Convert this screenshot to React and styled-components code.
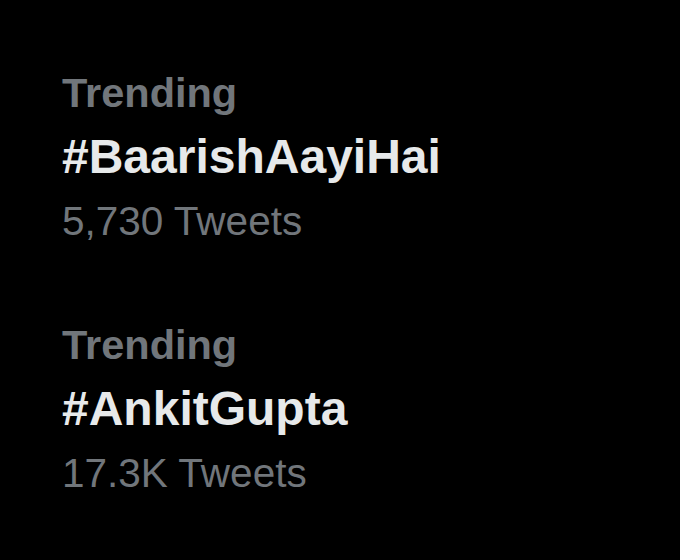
import React from 'react'
import styled, { createGlobalStyle } from 'styled-components'

const GlobalStyle = createGlobalStyle`
  html, body {
    margin: 0;
    padding: 0;
    background: #000;
  }
`

const Page = styled.div`
  width: 680px;
  height: 560px;
  background: #000;
  box-sizing: border-box;
  padding: 62px 0 0 62px;
  display: flex;
  flex-direction: column;
  gap: 62px;
  font-family: 'Liberation Sans', Arial, sans-serif;
`

const TrendItem = styled.div`
  display: flex;
  flex-direction: column;
`

const Label = styled.div`
  color: #71767b;
  font-size: 41.5px;
  font-weight: 700;
  line-height: 62px;
`

const Tag = styled.div`
  color: #e7e9ea;
  font-size: 48px;
  font-weight: 700;
  line-height: 66px;
`

const Count = styled.div`
  color: #71767b;
  font-size: 40.5px;
  font-weight: 400;
  line-height: 62px;
`

const trends = [
  { tag: '#BaarishAayiHai', count: '5,730 Tweets' },
  { tag: '#AnkitGupta', count: '17.3K Tweets' },
]

export default function App() {
  return (
    <>
      <GlobalStyle />
      <Page>
        {trends.map(t => (
          <TrendItem key={t.tag}>
            <Label>Trending</Label>
            <Tag>{t.tag}</Tag>
            <Count>{t.count}</Count>
          </TrendItem>
        ))}
      </Page>
    </>
  )
}
